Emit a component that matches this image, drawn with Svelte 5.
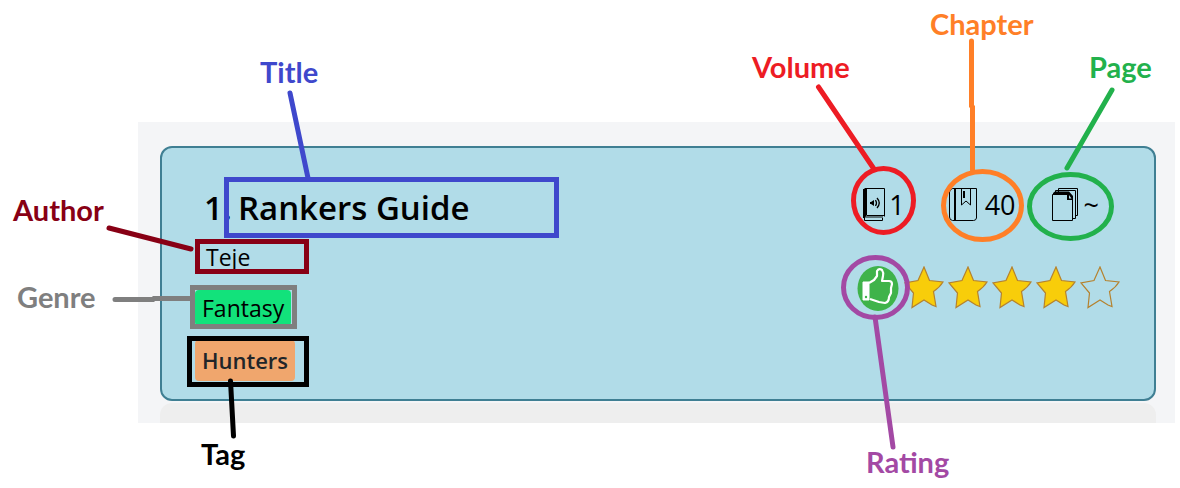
<script>
  const book = {
    rank: 1,
    title: 'Rankers Guide',
    author: 'Teje',
    genre: 'Fantasy',
    tag: 'Hunters',
    volume: '1',
    chapter: '40',
    page: '~',
    rating: 4
  };
  const stars = [1, 2, 3, 4, 5];
</script>

<main class="figure">
  <section class="panel">
    <article class="card">
      <div class="info">
        <h2><span>{book.rank}.</span><span>{book.title}</span></h2>
        <p class="author">{book.author}</p>
        <span class="badge genre">{book.genre}</span>
        <span class="badge tag">{book.tag}</span>
      </div>
      <div class="meta">
        <div class="stats">
          <span class="stat">
            <svg width="22" height="34" viewBox="0 0 22 34" aria-hidden="true">
              <path d="M1.500 .5H21.500V28.500M1.500 28V32.500H19.500V28" fill="none" stroke="#000" />
              <path d="M0 1H4V27L2 30H0Z" />
              <path d="M4 27.500H22" stroke="#000" />
              <path d="M3 28H20V30H2Z" fill="#5c7278" />
              <path d="M7 14H8L11 12V18L8 16H7Z" />
              <path d="M12.500 12Q14.500 15 12.500 18M14 10Q18.500 15 14 20" fill="none" stroke="#000" stroke-width="1.300" />
            </svg>
            {book.volume}
          </span>
          <span class="stat">
            <svg width="28" height="34" viewBox="0 0 28 34" aria-hidden="true">
              <path d="M3.500 .5H27.500V30Q27 32.500 24.500 32.500H3.500Q.5 32 .5 29V4Q1 1 3.500 .5Z" fill="none" stroke="#000" />
              <path d="M6 .5V32.500" stroke="#000" stroke-width="2" />
              <path d="M12.500 .5V17L17 13L21.500 17V.5" fill="none" stroke="#000" />
              <path d="M15 3V10" stroke="#000" stroke-width="2" />
            </svg>
            {book.chapter}
          </span>
          <span class="stat">
            <svg width="27" height="34" viewBox="0 0 27 34" aria-hidden="true">
              <path d="M6.500 4V.5H25.500V27.500H23.500M3.500 6V2.500H23.500V30.500H21" fill="none" stroke="#000" />
              <path d="M.5 6.500L2 5H15.500L20.500 11.500V32.500H.5Z" fill="none" stroke="#000" />
              <path d="M1 5L3 3.500H17L21 8V12H15V7H1Z" />
              <path d="M17 7L19.500 10.500H17Z" fill="#b1dce8" />
            </svg>
            {book.page}
          </span>
        </div>
        <div class="rating">
          <svg class="thumb" width="42" height="46" viewBox="0 0 42 46" aria-hidden="true">
            <ellipse cx="21" cy="22.500" rx="20.500" ry="22.500" fill="#3fb34a" />
            <path d="M6 16H12V34H6Z" fill="#fff" stroke="#fff" stroke-width="1" />
            <path d="M12 17L17 14L20 10V5Q22 2 25 4Q27 7 26 10L25 15H32Q35 15 35 18L34 22L34 27L32 31Q32 36 28 37L22 36L13 33" fill="none" stroke="#fff" stroke-width="2.200" stroke-linejoin="round" />
            <circle cx="9" cy="31" r="1.200" fill="#3fb34a" />
          </svg>
          {#each stars as n}
            <svg class="star" width="44" height="44" viewBox="0 0 44 44" aria-hidden="true">
              <path
                d="M22 1L27.500 14.500L41 16Q38 21 31.500 25.500L34 40.500L30 39L22 34L10 41.500L11.500 27L3 17L16 14.500Z"
                fill={n <= book.rating ? '#f8cd0a' : 'none'}
                stroke="#b5822e"
                stroke-width="1.200"
              />
            </svg>
          {/each}
        </div>
      </div>
    </article>
    <div class="next"></div>
  </section>

  <svg class="notes left" width="600" height="488" viewBox="0 0 600 488">
    <g class="blue">
      <text x="260" y="83">Title</text>
      <path d="M290 93L308 178" />
      <rect x="226.500" y="179.500" width="330" height="56" />
    </g>
    <g class="maroon">
      <text x="13" y="221">Author</text>
      <path d="M109 228L191 249" />
      <rect x="197.500" y="241.500" width="109" height="30" />
    </g>
    <g class="gray">
      <text x="17" y="308">Genre</text>
      <path d="M115 299.500H153L154 298.500H190" />
      <rect x="192.500" y="287.500" width="102" height="39" />
    </g>
    <g class="black">
      <text x="201" y="465">Tag</text>
      <path d="M230.500 381L233.500 436" />
      <rect x="189.500" y="338.500" width="117" height="46" />
    </g>
  </svg>

  <svg class="notes right" width="460" height="488" viewBox="720 0 460 488">
    <g class="red">
      <text x="752" y="78">Volume</text>
      <path d="M818.500 87L874 169" />
      <ellipse cx="883.500" cy="200.500" rx="30" ry="32" />
    </g>
    <g class="orange">
      <text x="930" y="35">Chapter</text>
      <path d="M971.500 41V106L972.500 107V170" />
      <ellipse cx="982.500" cy="205.500" rx="39" ry="34" />
    </g>
    <g class="green">
      <text x="1089" y="78">Page</text>
      <path d="M1112 90L1067 168" />
      <ellipse cx="1070.500" cy="206.500" rx="41" ry="32" />
    </g>
    <g class="purple">
      <text x="866" y="473">Rating</text>
      <path d="M875 317L893 447" />
      <ellipse cx="875.500" cy="287.500" rx="32" ry="30" />
    </g>
  </svg>
</main>

<style>
  :global(body) {
    margin: 0;
    background: #fff;
  }
  .figure {
    position: relative;
    box-sizing: border-box;
    min-width: 900px;
    padding: 122px 5px 65px 138px;
    color: #000;
    font-family: 'Open Sans', 'Noto Sans', sans-serif;
  }
  .panel {
    padding: 24px 19px 0 22px;
    background: #f4f5f7;
  }
  .card {
    display: flex;
    justify-content: space-between;
    padding: 36px 32px 18px 33px;
    border: 2px solid #3f7f93;
    border-radius: 12px;
    background: #b1dce8;
  }
  .info {
    display: flex;
    flex-direction: column;
    align-items: flex-start;
  }
  h2 {
    display: flex;
    gap: 6px;
    margin: 0 0 8px;
    padding-left: 9px;
    font-size: 33px;
    font-weight: 600;
    line-height: 48px;
  }
  .author {
    margin: 0 0 16px;
    padding-left: 11px;
    font-size: 23px;
    line-height: 34px;
  }
  .badge {
    padding: 0 7px;
    border-radius: 4px;
    font-size: 23px;
    line-height: 36px;
  }
  .genre {
    margin-bottom: 14px;
    background: #12e27b;
  }
  .tag {
    background: #f0a66d;
    color: #212529;
    font-size: 22px;
    font-weight: 600;
    line-height: 41px;
  }
  .meta {
    display: flex;
    flex-direction: column;
    align-items: flex-end;
    gap: 40px;
  }
  .stats {
    display: flex;
    gap: 44px;
    padding-right: 23px;
    font-size: 27px;
    line-height: 42px;
  }
  .stat {
    display: flex;
    align-items: center;
    gap: 4px;
  }
  .stat + .stat {
    gap: 8px;
  }
  .stat:last-child {
    gap: 5px;
    margin-left: -8px;
  }
  .rating {
    display: flex;
  }
  .thumb {
    margin-right: 3px;
  }
  .next {
    height: 20px;
    margin-top: 2px;
    border-radius: 12px 12px 0 0;
    background: #eee;
  }
  .notes {
    position: absolute;
    top: 0;
    fill: none;
    stroke-width: 5px;
    stroke-linecap: round;
    pointer-events: none;
  }
  .left { left: 0; }
  .right { right: 0; }
  .notes g { stroke: currentColor; }
  .notes text {
    fill: currentColor;
    stroke: none;
    font: 700 29px Lato, sans-serif;
  }
  .blue { color: #3f48cc; }
  .maroon { color: #880015; }
  .gray { color: #7f7f7f; }
  .black { color: #000; }
  .red { color: #ed1c24; }
  .orange { color: #ff7f27; }
  .green { color: #22b14c; }
  .purple { color: #a349a4; }
</style>
